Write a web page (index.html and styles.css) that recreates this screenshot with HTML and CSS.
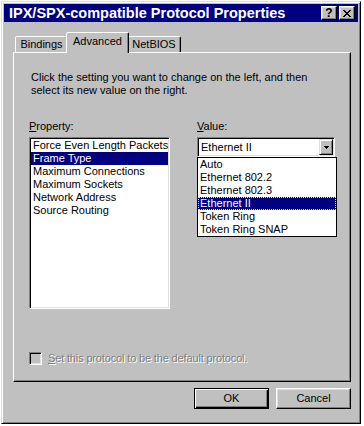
FILE: index.html
```html
<!DOCTYPE html>
<html>
<head>
<meta charset="utf-8">
<link rel="stylesheet" href="styles.css">
</head>
<body>
<div class="window">
  <div class="titlebar">
    <span class="title">IPX/SPX-compatible Protocol Properties</span>
    <div class="caption-btns">
      <span class="cap-btn help">?</span>
      <span class="cap-btn close">
        <svg width="8" height="7" viewBox="0 0 8 7" shape-rendering="crispEdges">
          <rect x="0" y="0" width="2" height="1"/><rect x="6" y="0" width="2" height="1"/>
          <rect x="1" y="1" width="2" height="1"/><rect x="5" y="1" width="2" height="1"/>
          <rect x="2" y="2" width="4" height="1"/>
          <rect x="3" y="3" width="2" height="1"/>
          <rect x="2" y="4" width="4" height="1"/>
          <rect x="1" y="5" width="2" height="1"/><rect x="5" y="5" width="2" height="1"/>
          <rect x="0" y="6" width="2" height="1"/><rect x="6" y="6" width="2" height="1"/>
        </svg>
      </span>
    </div>
  </div>
  <div class="client">
    <div class="tabs">
      <div class="tab tab-bindings">Bindings</div>
      <div class="tab tab-advanced active">Advanced</div>
      <div class="tab tab-netbios">NetBIOS</div>
    </div>
    <div class="panel">
      <p class="intro">Click the setting you want to change on the left, and then<br>select its new value on the right.</p>
      <div class="columns">
        <div class="col col-property">
          <div class="label"><u>P</u>roperty:</div>
          <div class="listbox">
            <div class="item">Force Even Length Packets</div>
            <div class="item sel">Frame Type</div>
            <div class="item">Maximum Connections</div>
            <div class="item">Maximum Sockets</div>
            <div class="item">Network Address</div>
            <div class="item">Source Routing</div>
          </div>
        </div>
        <div class="col col-value">
          <div class="label"><u>V</u>alue:</div>
          <div class="combo-wrap">
            <div class="combo">
              <span class="combo-text">Ethernet II</span>
              <span class="combo-btn">
                <svg width="5" height="3" viewBox="0 0 5 3" shape-rendering="crispEdges">
                  <rect x="0" y="0" width="5" height="1"/><rect x="1" y="1" width="3" height="1"/><rect x="2" y="2" width="1" height="1"/>
                </svg>
              </span>
            </div>
            <div class="dropdown">
              <div class="dd-item">Auto</div>
              <div class="dd-item">Ethernet 802.2</div>
              <div class="dd-item">Ethernet 802.3</div>
              <div class="dd-item sel">Ethernet II</div>
              <div class="dd-item">Token Ring</div>
              <div class="dd-item">Token Ring SNAP</div>
            </div>
          </div>
        </div>
      </div>
      <div class="check-row">
        <span class="checkbox"></span>
        <span class="check-label"><u>S</u>et this protocol to be the default protocol.</span>
      </div>
    </div>
    <div class="buttons">
      <div class="btn default">OK</div>
      <div class="btn">Cancel</div>
    </div>
  </div>
</div>
</body>
</html>
```
FILE: styles.css
```css
body {
  margin: 0;
  background: #fff;
  font-family: "Liberation Sans", Arial, sans-serif;
  font-size: 11px;
  line-height: 13px;
  color: #000;
}
.window {
  box-sizing: border-box;
  width: 360px;
  height: 423px;
  margin: 1px 0 0 1px;
  background: #c0c0c0;
  border: 1px solid;
  border-color: #dfdfdf #000 #000 #dfdfdf;
  box-shadow: inset 1px 1px #fff, inset -1px -1px #808080;
  padding: 2px;
  display: flex;
  flex-direction: column;
}
.titlebar {
  height: 18px;
  flex: none;
  background: #000080;
  color: #fff;
  display: flex;
  align-items: center;
  padding: 0 3px 0 5px;
}
.title {
  flex: 1;
  font-weight: bold;
  font-size: 14.5px;
  white-space: nowrap;
}
.caption-btns {
  display: flex;
  gap: 2px;
}
.cap-btn {
  box-sizing: border-box;
  width: 16px;
  height: 14px;
  background: #c0c0c0;
  border: 1px solid;
  border-color: #fff #000 #000 #fff;
  box-shadow: inset -1px -1px #808080, inset 1px 1px #dfdfdf;
  display: flex;
  align-items: center;
  justify-content: center;
  color: #000;
  font-weight: bold;
  font-size: 12px;
  line-height: 12px;
}
.cap-btn svg { fill: #000; display: block; }
.client {
  flex: 1;
  display: flex;
  flex-direction: column;
  padding: 10px 0 0 9px;
}
.tabs {
  display: flex;
  align-items: flex-end;
  height: 20px;
  padding-left: 2px;
  flex: none;
}
.tab {
  box-sizing: border-box;
  height: 16px;
  border: 1px solid;
  border-bottom: none;
  border-color: #fff #000 transparent #fff;
  box-shadow: inset -1px 0 #808080;
  border-radius: 2px 2px 0 0;
  padding-top: 1px;
  text-align: center;
  background: #c0c0c0;
}
.tab-bindings { width: 53px; }
.tab-netbios { width: 54px; }
.tab-advanced {
  width: 63px;
  margin: 0 -2px -1px;
}
.tab.active {
  height: 21px;
  padding-top: 2px;
  position: relative;
  z-index: 1;
}
.panel {
  box-sizing: border-box;
  width: 338px;
  height: 330px;
  flex: none;
  border: 1px solid;
  border-color: #fff #000 #000 #fff;
  box-shadow: inset -1px -1px #808080;
  padding: 18px 15px 16px 15px;
  display: flex;
  flex-direction: column;
}
.intro {
  margin: 0 0 0 2px;
}
.columns {
  display: flex;
  gap: 27px;
  margin-top: 23px;
}
.col-property { width: 141px; }
.col-value { width: 140px; }
.label { margin-bottom: 4px; }
.listbox {
  box-sizing: border-box;
  height: 172px;
  background: #fff;
  border: 1px solid;
  border-color: #808080 #fff #fff #808080;
  box-shadow: inset 1px 1px #000, inset -1px -1px #dfdfdf;
  padding: 1px;
}
.item {
  padding-left: 2px;
  white-space: nowrap;
}
.item.sel {
  background: #000080;
  color: #fff;
}
.combo-wrap { position: relative; }
.combo {
  box-sizing: border-box;
  height: 20px;
  background: #fff;
  border: 1px solid;
  border-color: #808080 #fff #fff #808080;
  box-shadow: inset 1px 1px #000, inset -1px -1px #dfdfdf;
  padding: 1px;
  display: flex;
}
.combo-text {
  flex: 1;
  padding-left: 2px;
  line-height: 16px;
}
.combo-btn {
  box-sizing: border-box;
  width: 14px;
  height: 16px;
  background: #c0c0c0;
  border: 1px solid;
  border-color: #dfdfdf #000 #000 #dfdfdf;
  box-shadow: inset 1px 1px #fff, inset -1px -1px #808080;
  display: flex;
  align-items: center;
  justify-content: center;
}
.combo-btn svg { fill: #000; display: block; }
.dropdown {
  position: absolute;
  top: 20px;
  left: 0;
  width: 140px;
  box-sizing: border-box;
  background: #fff;
  border: 1px solid #000;
  z-index: 2;
}
.dd-item {
  padding-left: 2px;
  height: 13px;
  white-space: nowrap;
}
.dd-item.sel {
  background: #000080;
  color: #fff;
  outline: 1px dotted #ffff00;
  outline-offset: -1px;
}
.check-row {
  margin-top: auto;
  display: flex;
  align-items: center;
  gap: 6px;
  height: 13px;
}
.checkbox {
  box-sizing: border-box;
  width: 13px;
  height: 13px;
  border: 1px solid;
  border-color: #808080 #fff #fff #808080;
  box-shadow: inset 1px 1px #000, inset -1px -1px #dfdfdf;
  background: #c0c0c0;
}
.check-label {
  color: #808080;
  text-shadow: 1px 1px 0 #fff;
  white-space: nowrap;
  letter-spacing: -0.15px;
}
.buttons {
  width: 338px;
  display: flex;
  justify-content: flex-end;
  gap: 7px;
  margin-top: 6px;
}
.btn {
  box-sizing: border-box;
  width: 75px;
  height: 21px;
  border: 1px solid;
  border-color: #fff #000 #000 #fff;
  box-shadow: inset -1px -1px #808080, inset 1px 1px #dfdfdf;
  display: flex;
  align-items: center;
  justify-content: center;
}
.btn.default {
  border-color: #000;
  box-shadow: inset 1px 1px #fff, inset -1px -1px #000, inset -2px -2px #808080;
}
```
